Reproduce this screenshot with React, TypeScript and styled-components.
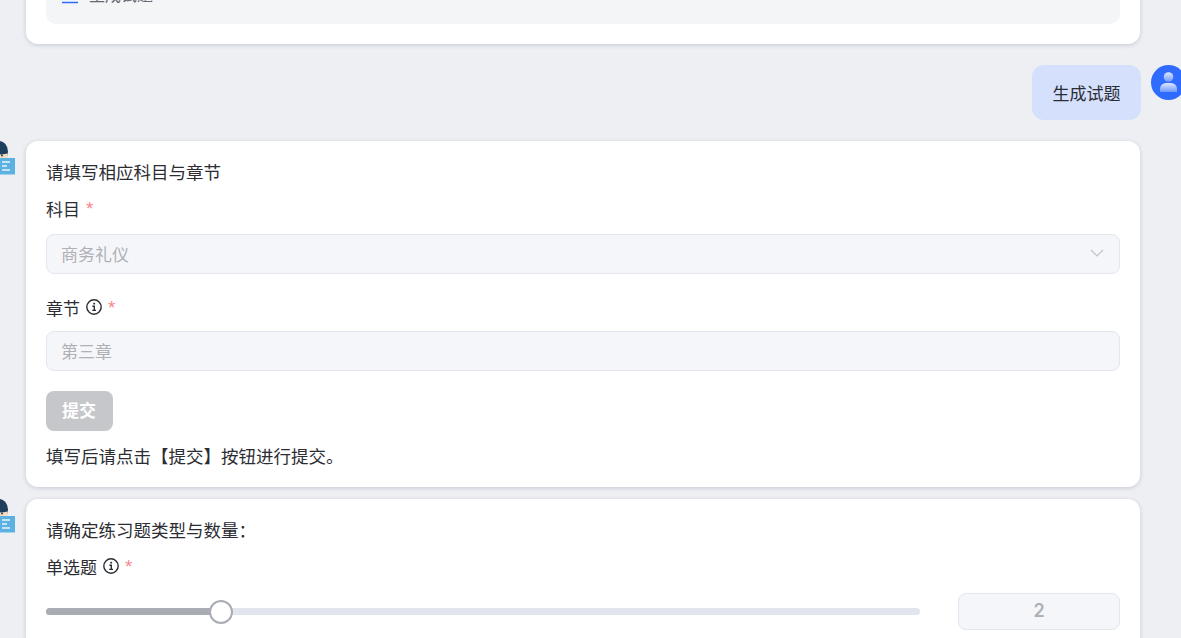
import styled, { createGlobalStyle } from "styled-components";

const GlobalStyle = createGlobalStyle`
  html, body {
    margin: 0;
    height: 100%;
    overflow: hidden;
    background: #edeff3;
  }
  body {
    font-family: "Noto Sans CJK SC", "Liberation Sans", sans-serif;
    color: #2b2d33;
  }
`;

const Page = styled.div`
  width: 1181px;
  height: 638px;
  overflow: hidden;
  display: flex;
  flex-direction: column;
`;

const Row = styled.div<{ $gap?: number }>`
  display: flex;
  align-items: flex-start;
  margin-top: ${(p) => p.$gap ?? 0}px;
`;

const BotRow = styled(Row)`
  margin-left: -20px;
  gap: 10px;
`;

const UserRow = styled(Row)`
  justify-content: flex-end;
  gap: 10px;
  margin-right: -5px;
`;

const Card = styled.div`
  flex: none;
  width: 1114px;
  box-sizing: border-box;
  padding: 20px;
  background: #fff;
  border-radius: 12px;
  box-shadow: 0 1px 4px rgba(60, 70, 100, 0.22);
`;

const ClippedCard = styled(Card)`
  margin-left: 26px;
  margin-top: -60px;
`;

const Recommend = styled.div`
  display: flex;
  align-items: flex-end;
  gap: 11px;
  height: 64px;
  padding: 0 16px 18px;
  box-sizing: border-box;
  background: #f4f5f7;
  border-radius: 10px;
  font-size: 16px;
  line-height: 24px;
  color: #666a72;
`;

const Bubble = styled.div`
  width: 109px;
  height: 55px;
  box-sizing: border-box;
  display: flex;
  align-items: center;
  justify-content: center;
  background: #d5e0fd;
  border-radius: 12px;
  font-size: 17px;
`;

const Title = styled.div`
  font-size: 17.5px;
  line-height: 22px;
  margin-bottom: 14px;
`;

const Label = styled.div<{ $mb: number }>`
  display: flex;
  align-items: center;
  gap: 6px;
  height: 22px;
  font-size: 17px;
  margin-bottom: ${(p) => p.$mb}px;
`;

const Required = styled.span`
  color: #f78989;
  font-family: "Liberation Sans", sans-serif;
  font-size: 19px;
  line-height: 1;
  margin-top: 1px;
`;

const Field = styled.div<{ $mb: number }>`
  display: flex;
  align-items: center;
  justify-content: space-between;
  height: 40px;
  box-sizing: border-box;
  padding: 0 15px 2px 14px;
  background: #f5f6fa;
  border: 1px solid #e4e6ef;
  border-radius: 8px;
  font-size: 17px;
  color: #aeb0b6;
  margin-bottom: ${(p) => p.$mb}px;
`;

const SubmitButton = styled.button`
  display: block;
  width: 67px;
  height: 40px;
  padding: 0 1px 4px 0;
  border: none;
  border-radius: 8px;
  background: #c6c7cb;
  color: #fff;
  font-family: inherit;
  font-size: 17px;
  font-weight: 600;
`;

const Hint = styled.div`
  font-size: 17.5px;
  line-height: 23px;
  margin-top: 13px;
`;

const SliderRow = styled.div`
  display: flex;
  align-items: center;
  justify-content: space-between;
`;

const Track = styled.div`
  position: relative;
  width: 874px;
  height: 7px;
  border-radius: 4px;
  background: #e1e5ee;
`;

const Fill = styled.div`
  height: 100%;
  border-radius: 4px;
  background: #a9acb3;
`;

const Thumb = styled.div`
  position: absolute;
  top: 50%;
  width: 24px;
  height: 24px;
  box-sizing: border-box;
  transform: translate(-50%, -50%);
  border-radius: 50%;
  background: #fff;
  border: 2px solid #a9acb3;
`;

const NumberBox = styled.div`
  width: 162px;
  height: 37px;
  box-sizing: border-box;
  display: flex;
  align-items: center;
  justify-content: center;
  padding-bottom: 2px;
  background: #f5f6fa;
  border: 1px solid #e4e6ef;
  border-radius: 8px;
  font-family: "Inter", "Liberation Sans", sans-serif;
  font-size: 18px;
  font-weight: 600;
  color: #aeb0b6;
`;

const BotAvatar = () => (
  <svg width="36" height="36" viewBox="0 -1 36 36" style={{ flex: "none" }}>
    <ellipse cx="19" cy="9.5" rx="9" ry="10.5" fill="#1f3d5c" />
    <path d="M10 11q9 2.5 17.5 .5q.5 3 -1 5h-16.5z" fill="#f6dcc0" />
    <circle cx="22" cy="13.5" r="1" fill="#1f3d5c" />
    <rect x="12" y="16" width="23" height="16.5" fill="#5bb2e2" />
    <path d="M22 20h8M22 24h5M22 28h8" stroke="#e8f5fc" strokeWidth="1.4" />
  </svg>
);

const UserAvatar = () => (
  <svg width="35" height="35" viewBox="0 0 35 35" style={{ flex: "none" }}>
    <defs>
      <linearGradient id="person" x1="0" y1="0" x2="0" y2="1">
        <stop offset="0" stopColor="#dfe8ff" />
        <stop offset="1" stopColor="#6d97ff" />
      </linearGradient>
    </defs>
    <circle cx="17.5" cy="17.5" r="17.5" fill="#2f6bff" />
    <circle cx="17.5" cy="12" r="4.8" fill="url(#person)" />
    <path d="M9 27v-3.5a6 6 0 0 1 6 -5.5h5a6 6 0 0 1 6 5.5v3.5z" fill="url(#person)" />
  </svg>
);

const InfoIcon = () => (
  <svg width="16" height="16" viewBox="0 0 16 16" fill="none" stroke="#2b2d33">
    <circle cx="8" cy="8" r="7.2" strokeWidth="1.4" />
    <path d="M6.4 7.2h1.9v4M6.2 11.4h3.8" strokeWidth="1.4" />
    <path d="M8.2 3.8v1.7" strokeWidth="1.8" />
  </svg>
);

const Chevron = () => (
  <svg width="14" height="8" viewBox="0 0 14 8" fill="none" stroke="#c3c5ca" strokeWidth="1.2">
    <path d="M1 1l6 6 6-6" />
  </svg>
);

const ListIcon = () => (
  <svg width="16" height="16" viewBox="0 0 16 16" fill="none" stroke="#2f6bff" strokeWidth="1.5">
    <path d="M0 12.5h16" />
  </svg>
);

const App = () => {
  const sliderPercent = (175 / 874) * 100;
  return (
    <Page>
      <GlobalStyle />
      <Row>
        <ClippedCard>
          <Recommend>
            <ListIcon />
            生成试题
          </Recommend>
        </ClippedCard>
      </Row>

      <UserRow $gap={21}>
        <Bubble>生成试题</Bubble>
        <UserAvatar />
      </UserRow>

      <BotRow $gap={21}>
        <BotAvatar />
        <Card>
          <Title>请填写相应科目与章节</Title>
          <Label $mb={15}>
            科目 <Required>*</Required>
          </Label>
          <Field $mb={22}>
            商务礼仪
            <Chevron />
          </Field>
          <Label $mb={13}>
            章节 <InfoIcon /> <Required>*</Required>
          </Label>
          <Field $mb={20}>第三章</Field>
          <SubmitButton>提交</SubmitButton>
          <Hint>填写后请点击【提交】按钮进行提交。</Hint>
        </Card>
      </BotRow>

      <BotRow $gap={12}>
        <BotAvatar />
        <Card>
          <Title>请确定练习题类型与数量：</Title>
          <Label $mb={16}>
            单选题 <InfoIcon /> <Required>*</Required>
          </Label>
          <SliderRow>
            <Track>
              <Fill style={{ width: `${sliderPercent}%` }} />
              <Thumb style={{ left: `${sliderPercent}%` }} />
            </Track>
            <NumberBox>2</NumberBox>
          </SliderRow>
        </Card>
      </BotRow>
    </Page>
  );
};

export default App;
